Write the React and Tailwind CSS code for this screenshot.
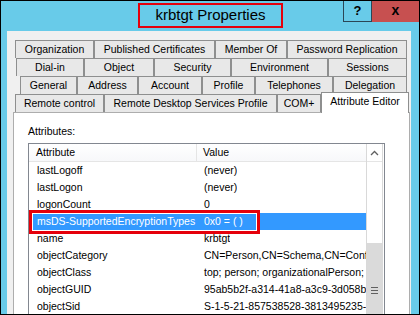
import React from 'react';

const font = { fontFamily: '"Liberation Sans", Arial, sans-serif' };

const tabRows = [
  { ml: 'ml-[2px]', tabs: [['Organization', 'w-[79px]'], ['Published Certificates', 'w-[121px]'], ['Member Of', 'w-[72px]'], ['Password Replication', 'w-[120px]']] },
  { ml: 'ml-[3px]', tabs: [['Dial-in', 'w-[68px]'], ['Object', 'w-[70px]'], ['Security', 'w-[77px]'], ['Environment', 'w-[97px]'], ['Sessions', 'w-[79px]']] },
  { ml: 'ml-[7px]', tabs: [['General', 'w-[57px]'], ['Address', 'w-[61px]'], ['Account', 'w-[64px]'], ['Profile', 'w-[53px]'], ['Telephones', 'w-[78px]'], ['Delegation', 'w-[74px]']] },
];

const rows = [
  ['lastLogoff', '(never)'],
  ['lastLogon', '(never)'],
  ['logonCount', '0'],
  ['msDS-SupportedEncryptionTypes', '0x0 = ( )', true],
  ['name', 'krbtgt'],
  ['objectCategory', 'CN=Person,CN=Schema,CN=Configuration,DC=corp,DC=local'],
  ['objectClass', 'top; person; organizationalPerson; user'],
  ['objectGUID', '95ab5b2f-a314-41a8-a3c9-3d058b7e21c4'],
  ['objectSid', 'S-1-5-21-857538528-3813495235-1472880417-502'],
];

function Tab({ label, w }) {
  return (
    <div className={`${w} h-[18px] shrink-0 border border-b-0 border-[#8e8f8f] bg-[#e8e8e8] flex items-center justify-center text-[10.5px] leading-[17px] text-black whitespace-nowrap`}>
      {label}
    </div>
  );
}

export default function App() {
  return (
    <div style={font} className="w-[420px] h-[315px] overflow-hidden border border-black bg-[#68cbe9] flex flex-col">
      {/* title bar */}
      <div className="relative h-[30px] shrink-0 flex justify-center pt-[2px]">
        <div className="w-[145px] h-[25px] border-2 border-[#e5000b] flex items-center justify-center text-[15px] text-black pl-[1px]">
          krbtgt Properties
        </div>
        <div className="absolute right-0 -top-px flex">
          <div className="w-[29px] h-[22px] border border-[#2b4656] flex items-center justify-center text-[13px] font-bold text-black">?</div>
          <div className="w-[47px] h-[22px] bg-[#c75050] flex items-center justify-center text-[14px] font-bold text-black leading-none pb-[2px]">x</div>
        </div>
      </div>

      {/* dialog body */}
      <div className="flex-1 ml-[6px] mr-[8px] bg-[#f0f0f0] pt-[9px] pl-[6px] pr-[1px] flex flex-col min-h-0">
        {tabRows.map((row, i) => (
          <div key={i} className={`flex ${row.ml}`}>
            {row.tabs.map(([label, w]) => <Tab key={label} label={label} w={w} />)}
          </div>
        ))}
        <div className="flex items-end h-[18px] ml-[2px]">
          <Tab label="Remote control" w="w-[89px]" />
          <Tab label="Remote Desktop Services Profile" w="w-[173px]" />
          <Tab label="COM+" w="w-[44px]" />
          <div className="relative z-10 w-[88px] h-[21px] -mb-px shrink-0 border border-b-0 border-[#8e8f8f] bg-white text-[10.5px] leading-[14px] pt-[1px] text-center text-black whitespace-nowrap">
            Attribute Editor
          </div>
        </div>

        {/* tab page */}
        <div className="flex-1 bg-white border border-[#adadad] border-b-0 pt-[12px] pl-[14px]">
          <div className="text-[10.5px] leading-[13px] text-black">Attributes:</div>
          <div className="mt-[5px] w-[357px] h-[200px] border border-[#828790] flex">
            <div className="flex-1 min-w-0">
              <div className="flex h-[18px] border-b border-[#e5e5e5] bg-gradient-to-b from-white to-[#f7f8fa] text-[10.5px] text-black">
                <div className="w-[168px] shrink-0 pl-[7px] leading-[17px] border-r border-[#e5e5e5]">Attribute</div>
                <div className="pl-[6px] leading-[17px]">Value</div>
              </div>
              {rows.map(([attr, val, sel]) => (
                <div key={attr} className={`relative flex h-[17px] text-[10.5px] leading-[17px] whitespace-nowrap ${sel ? 'bg-[#3399ff] text-white' : 'text-black'}`}>
                  <div className="w-[168px] shrink-0 pl-[8px] overflow-hidden">{attr}</div>
                  <div className="pl-[7px] overflow-hidden">{val}</div>
                  {sel && (
                    <div className="absolute left-0 -top-[3px] w-[231px] h-[24px] border-[3px] border-[#e5000b]">
                      <div className="w-full h-full border border-white" />
                    </div>
                  )}
                </div>
              ))}
            </div>
            <div className="w-[17px] shrink-0 mr-[1px] border-x border-[#d9d9d9] flex flex-col">
              <div className="h-[18px] border-b border-[#e5e5e5] flex items-center justify-center">
                <svg width="9" height="6" viewBox="0 0 9 6">
                  <path d="M1 5 L4.5 1.5 L8 5" fill="none" stroke="#606060" strokeWidth="1.3" />
                </svg>
              </div>
              <div className="h-[81px]" />
              <div className="flex-1 bg-[#dadada] flex flex-col items-center pt-[44px] gap-[2px]">
                <div className="w-[7px] h-px bg-[#606060]" />
                <div className="w-[7px] h-px bg-[#606060]" />
                <div className="w-[7px] h-px bg-[#606060]" />
              </div>
            </div>
          </div>
        </div>
      </div>
    </div>
  );
}
